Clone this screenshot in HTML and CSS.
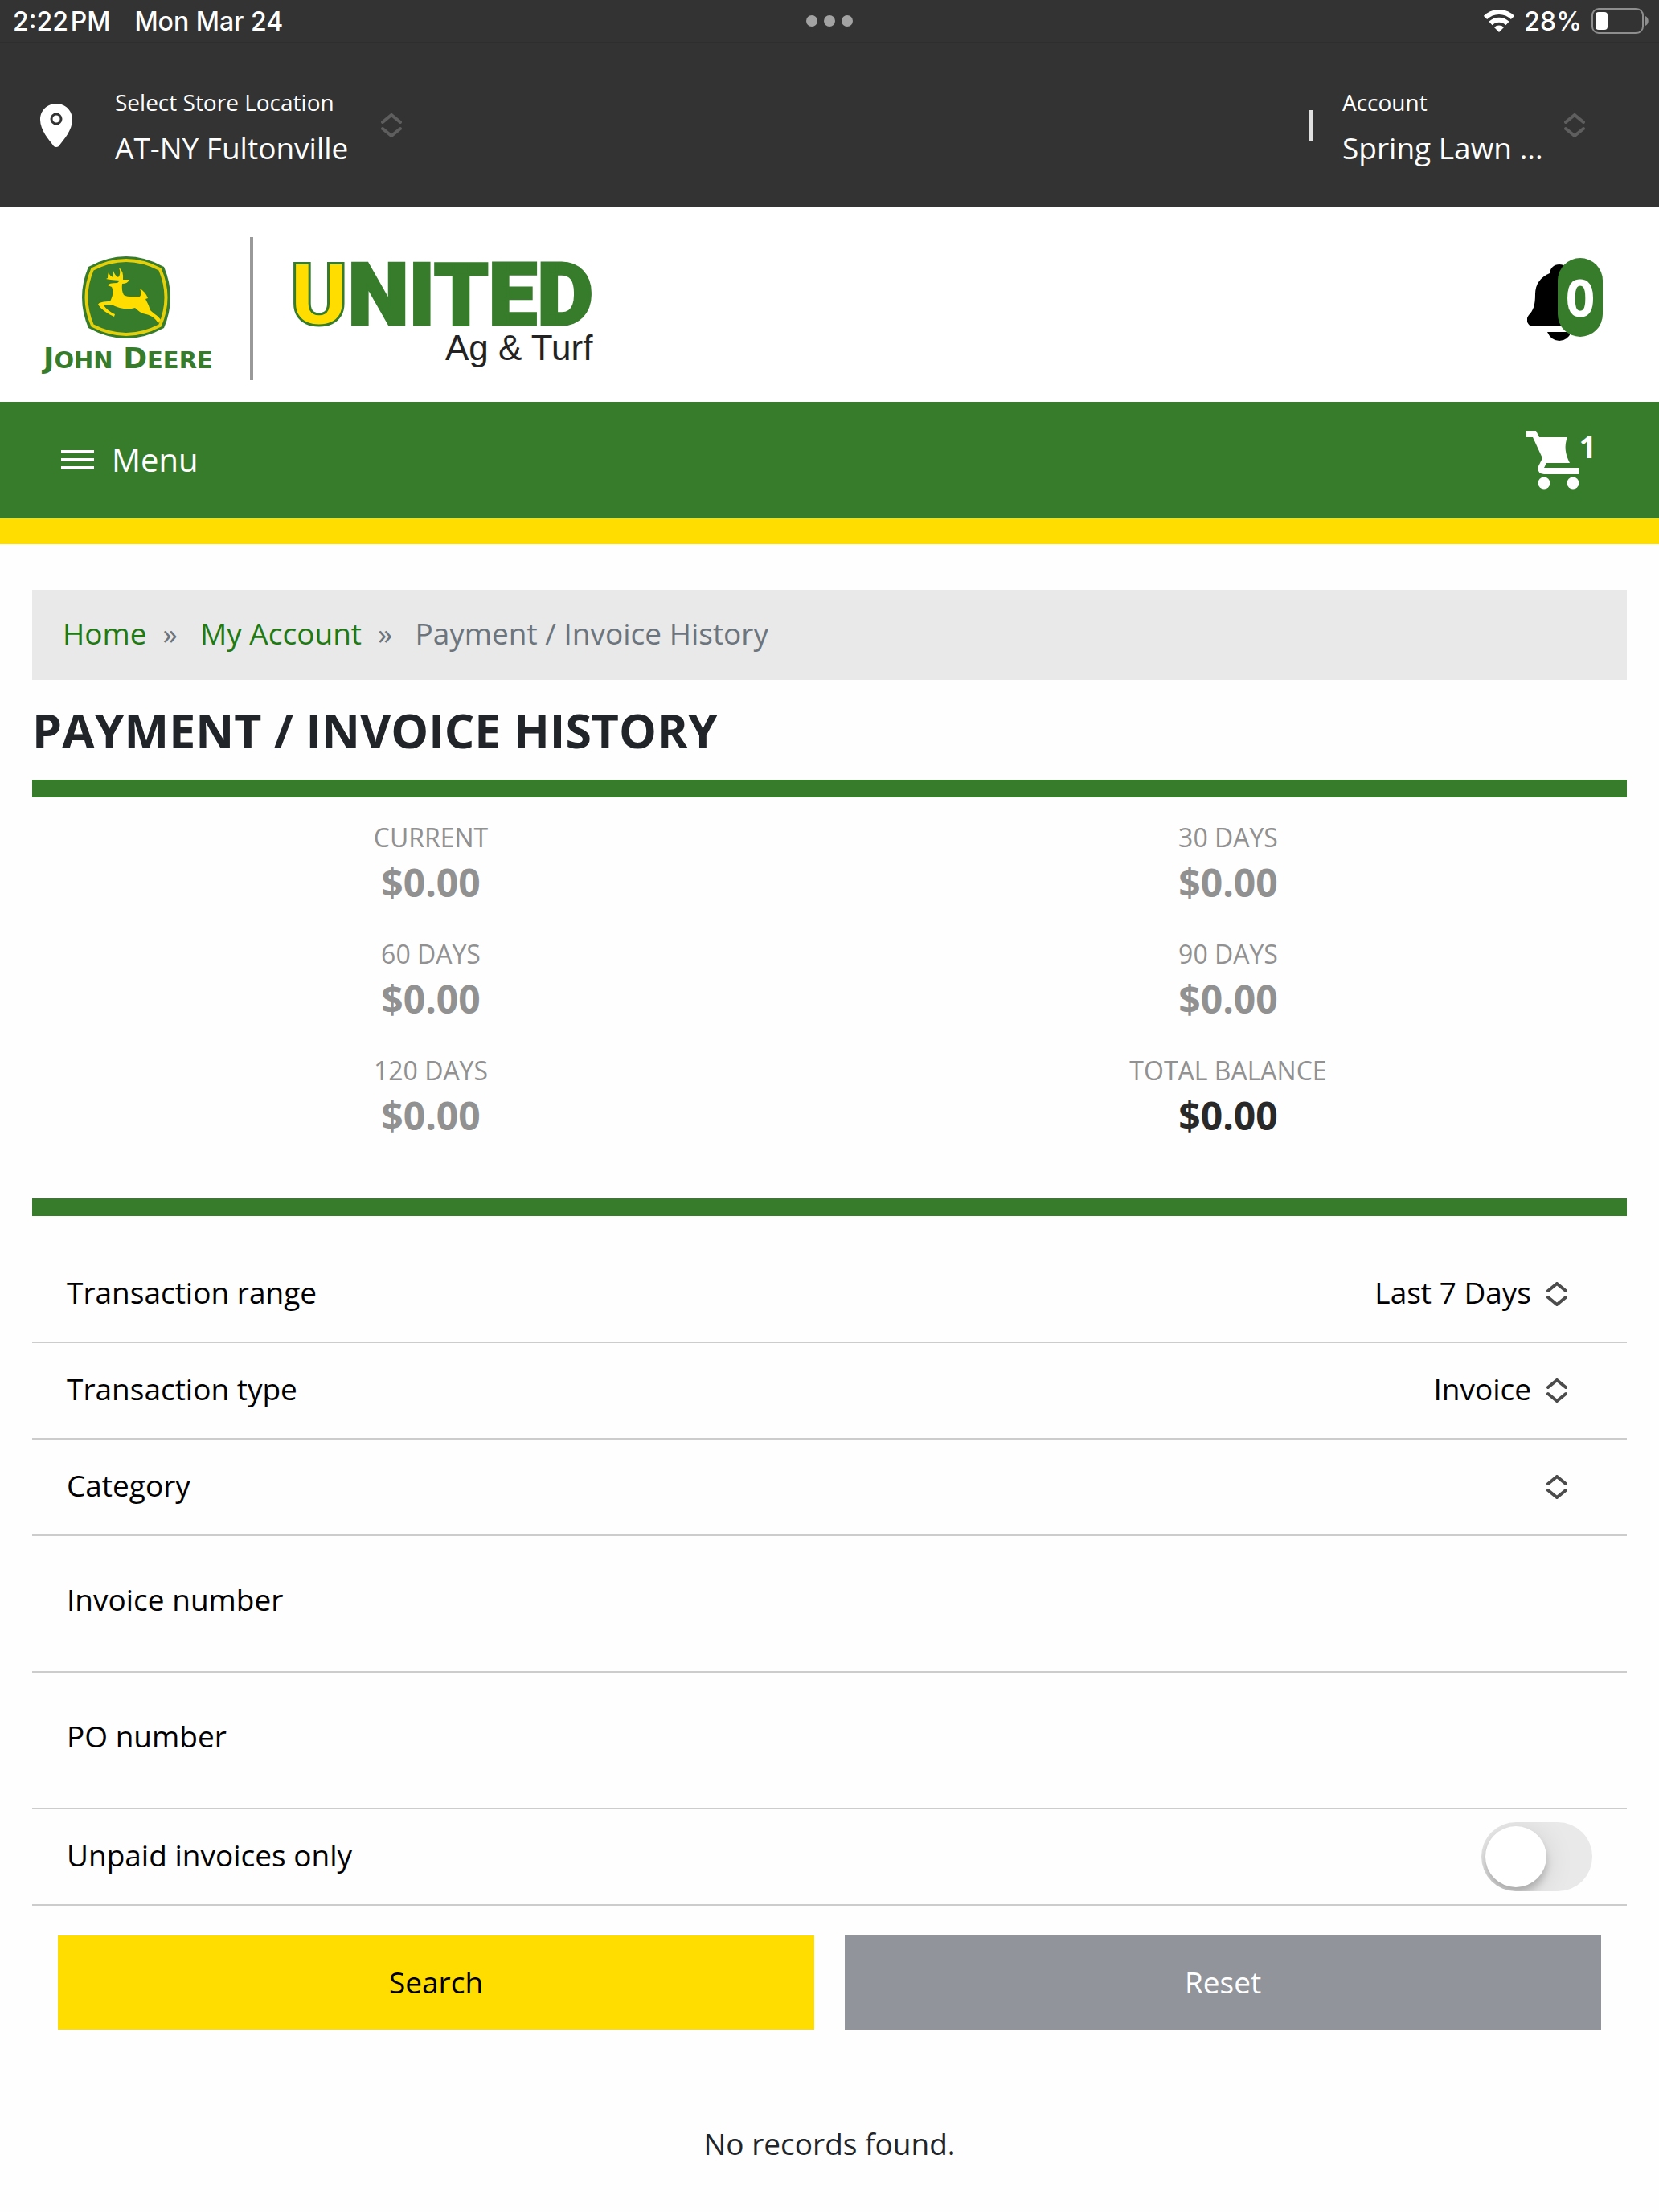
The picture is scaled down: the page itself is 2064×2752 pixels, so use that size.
FILE: index.html
```html
<!DOCTYPE html>
<html lang="en">
	<head>
		<meta charset="utf-8">
		<meta name="viewport" content="width=device-width, initial-scale=1">
		<title>Payment / Invoice History</title>
		<link rel="stylesheet" href="styles.css">
	</head>

	<body>

		<!-- shared up/down arrows for the select boxes -->
		<svg width="0" height="0" class="sprite" aria-hidden="true">
			<symbol id="updown" viewBox="0 0 26 30">
				<path d="M2 11 L13 2 L24 11 M2 19 L13 28 L24 19" fill="none" stroke="currentColor" stroke-width="4" stroke-linecap="round"/>
			</symbol>
		</svg>

		<!-- device status bar -->
		<div class="status">
			<div class="status-left">
				<span>2:22&#8202;PM</span>
				<span>Mon Mar 24</span>
			</div>
			<div class="dots"><i></i><i></i><i></i></div>
			<div class="status-right">
				<svg class="wifi" viewBox="0 0 38 28">
					<path d="M2 10 A24 24 0 0 1 36 10" fill="none" stroke="#fff" stroke-width="6"/>
					<path d="M8.500 17 A15 15 0 0 1 29.500 17" fill="none" stroke="#fff" stroke-width="6"/>
					<path d="M13 22 A8.500 8.500 0 0 1 25 22 L19 28 Z" fill="#fff"/>
				</svg>
				<span>28%</span>
				<svg class="battery" viewBox="0 0 74 32">
					<rect x="1" y="1" width="63" height="30" rx="8" fill="none" stroke="#8e8e8e" stroke-width="2"/>
					<rect x="5" y="5" width="15" height="22" rx="4" fill="#fff"/>
					<path d="M67 10 C72 12 72 20 67 22 Z" fill="#8e8e8e"/>
				</svg>
			</div>
		</div>

		<!-- store and account pickers -->
		<div class="topbar">
			<div class="picker">
				<svg class="pin" viewBox="0 0 40 54">
					<path d="M20 0 C9 0 0 8 0 20 C0 33 11 45 17 53 Q20 55 23 53 C29 45 40 33 40 20 C40 8 31 0 20 0 Z" fill="#fff"/>
					<circle cx="20" cy="19" r="6" fill="none" stroke="#333" stroke-width="3"/>
				</svg>
				<div class="picker-text">
					<label for="store">Select Store Location</label>
					<select id="store"><option>AT-NY Fultonville</option></select>
				</div>
				<svg class="arrows"><use href="#updown"/></svg>
			</div>
			<div class="picker account">
				<div class="picker-text">
					<label for="account">Account</label>
					<select id="account"><option>Spring Lawn ...</option></select>
				</div>
				<svg class="arrows"><use href="#updown"/></svg>
			</div>
		</div>

		<!-- logos and notifications -->
		<header class="brand">
			<svg class="logo" viewBox="0 0 700 180" role="img" aria-label="John Deere, United Ag &amp; Turf">
				<path d="M60 37 Q107 11 154 37 Q170 75 154 113 Q107 139 60 113 Q44 75 60 37 Z" fill="#367c2b"/>
				<path d="M65 40 Q107 18 149 40 Q164 75 149 110 Q107 132 65 110 Q50 75 65 40 Z" fill="none" stroke="#e3cf0c" stroke-width="4"/>
				<path d="M72 84 C73 81 79 80 87 80 C90 74 92 68 89 62 L84 60 Q85 57 96 57 L99 54 Q85 53 82 52 L84 51 Q84 46 85 44 Q87 49 91 50 Q91 45 91 42 Q93 48 97 50 Q101 46 98 38 Q104 42 103 53 L111 53 Q109 58 102 58 Q101 67 104 72 C108 75 116 74 124 74 Q127 71 124 64 Q131 68 134 76 L131 77 Q135 84 137 91 C142 96 147 98 150 103 L147 107 C143 101 139 98 132 96 C126 95 122 92 118 88 C109 91 96 88 91 85 Q83 83 79 85 Q84 92 93 96 L92 99 Q78 93 72 84 Z" fill="#fd0"/>
				<text x="4" y="163" class="deere"><tspan class="big">J</tspan>OHN<tspan class="big"> D</tspan>EERE</text>
				<rect x="261" y="0" width="4" height="178" fill="#999"/>
				<text x="311" y="109" class="united"><tspan class="united-u">U</tspan>NITED</text>
				<text x="504" y="153" class="turf">Ag &amp; Turf</text>
			</svg>
			<button class="bell" aria-label="Notifications">
				<svg viewBox="0 0 80 95">
					<path d="M40 0 C33 0 29 4 28 11 C16 16 10 25 10 37 C10 50 8 57 2 63 C-3 69 1 77 7 77 L73 77 C79 77 83 69 78 63 C72 57 70 50 70 37 C70 25 64 16 52 11 C51 4 47 0 40 0 Z"/>
					<path d="M25 84 H55 Q50 95 40 95 Q30 95 25 84 Z"/>
				</svg>
				<span>0</span>
			</button>
		</header>

		<nav class="nav">
			<button class="menu">
				<svg viewBox="0 0 41 25"><path d="M0 2 H41 M0 12 H41 M0 22 H41" stroke="#fff" stroke-width="4"/></svg>
				<span>Menu</span>
			</button>
			<a class="cart" href="#" aria-label="Shopping cart">
				<svg viewBox="0 0 66 73">
					<path d="M0 0 H12 L16 8 H51 Q45 23 54 40 H25 L22 46 H65 V54 H22 Q14 53 14 46 L20 34 L8 8 H0 Z" fill="#fff"/>
					<circle cx="22" cy="65" r="7.500" fill="#fff"/>
					<circle cx="58" cy="65" r="7.500" fill="#fff"/>
				</svg>
				<span>1</span>
			</a>
		</nav>

		<main>
			<div class="crumbs">
				<a href="#">Home</a>
				<span class="sep">»</span>
				<a href="#">My Account</a>
				<span class="sep">»</span>
				<span>Payment / Invoice History</span>
			</div>

			<h1>PAYMENT / INVOICE HISTORY</h1>

			<!-- account balances by age -->
			<dl class="balances">
				<div><dt>CURRENT</dt><dd>$0.00</dd></div>
				<div><dt>30 DAYS</dt><dd>$0.00</dd></div>
				<div><dt>60 DAYS</dt><dd>$0.00</dd></div>
				<div><dt>90 DAYS</dt><dd>$0.00</dd></div>
				<div><dt>120 DAYS</dt><dd>$0.00</dd></div>
				<div class="total"><dt>TOTAL BALANCE</dt><dd>$0.00</dd></div>
			</dl>

			<!-- search filters -->
			<form>
				<div class="row">
					<label for="range">Transaction range</label>
					<select id="range"><option>Last 7 Days</option></select>
					<svg class="arrows"><use href="#updown"/></svg>
				</div>
				<div class="row">
					<label for="type">Transaction type</label>
					<select id="type"><option>Invoice</option></select>
					<svg class="arrows"><use href="#updown"/></svg>
				</div>
				<div class="row">
					<label for="category">Category</label>
					<select id="category"><option></option></select>
					<svg class="arrows"><use href="#updown"/></svg>
				</div>
				<div class="row tall">
					<label for="invoice">Invoice number</label>
					<input id="invoice" type="text">
				</div>
				<div class="row tall">
					<label for="po">PO number</label>
					<input id="po" type="text">
				</div>
				<div class="row switch-row">
					<label for="unpaid">Unpaid invoices only</label>
					<input id="unpaid" class="switch" type="checkbox">
				</div>
				<div class="buttons">
					<button type="button" class="search">Search</button>
					<button type="reset" class="reset">Reset</button>
				</div>
			</form>

			<p class="empty">No records found.</p>
		</main>

	</body>
</html>
```
FILE: styles.css
```css
* {
	box-sizing: border-box;
}

body {
	margin: 0;
	background: #fefefe;
	color: #000;
	font-family: "Open Sans", sans-serif;
	font-size: 37px;
}

button, select, input {
	margin: 0;
	padding: 0;
	border: 0;
	border-radius: 0;
	background: none;
	color: inherit;
	font: inherit;
}

select {
	appearance: none;
}

svg {
	display: block;
	flex: none;
}

.sprite {
	position: absolute;
}

.arrows {
	width: 26px;
	height: 30px;
	color: #4c4c4c;
}

/*
	device status bar
*/

.status {
	display: grid;
	grid-template-columns: 1fr auto 1fr;
	align-items: center;
	height: 54px;
	padding: 0 10px;
	border-bottom: 2px solid #2e2e2e;
	background: #333;
	color: #fff;
	font-family: Inter, sans-serif;
	font-size: 32px;
	font-weight: 500;
}

.status-left {
	display: flex;
	gap: 30px;
	padding-left: 6px;
}

.status-right {
	display: flex;
	align-items: center;
	justify-content: flex-end;
	gap: 12px;
}

.wifi {
	width: 38px;
	height: 28px;
}

.battery {
	width: 74px;
	height: 32px;
}

.dots {
	display: flex;
	gap: 8px;
}

.dots i {
	width: 14px;
	height: 14px;
	border-radius: 50%;
	background: #a3a3a3;
}

/*
	store and account pickers
*/

.topbar {
	display: flex;
	align-items: center;
	justify-content: space-between;
	height: 204px;
	padding: 0 92px 0 50px;
	background: #333;
	color: #fff;
}

.picker {
	display: flex;
	align-items: center;
}

.picker .arrows {
	margin-left: 40px;
	color: #5e5e5e;
}

.picker-text {
	display: flex;
	flex-direction: column;
}

.picker-text label {
	font-size: 28px;
	line-height: 54px;
}

.picker-text select {
	height: 58px;
}

.pin {
	width: 40px;
	height: 54px;
	margin-right: 53px;
}

.account::before {
	content: "";
	width: 4px;
	height: 38px;
	margin-right: 37px;
	background: #e0e0e0;
}

.account .arrows {
	margin-left: 26px;
}

/*
	logos and notifications
*/

.brand {
	display: flex;
	align-items: center;
	justify-content: space-between;
	height: 242px;
	padding: 0 70px 0 50px;
	background: #fff;
}

.logo {
	width: 700px;
	height: 180px;
	margin-top: 12px;
}

.deere {
	fill: #367c2b;
	font-family: "DejaVu Sans", sans-serif;
	font-size: 29px;
	font-weight: 700;
}

.deere .big {
	font-size: 36px;
}

.united {
	fill: #367c2b;
	stroke: #367c2b;
	stroke-width: 3px;
	font-family: Roboto, sans-serif;
	font-size: 108px;
	font-weight: 900;
}

.united-u {
	fill: #fd0;
}

.turf {
	fill: #222;
	font-family: "Liberation Sans", sans-serif;
	font-size: 44px;
}

.bell {
	position: relative;
	width: 94px;
	height: 102px;
	margin-bottom: 6px;
}

.bell svg {
	width: 80px;
	height: 95px;
}

.bell span {
	position: absolute;
	top: -4px;
	right: 0;
	width: 56px;
	height: 98px;
	border-radius: 28px;
	background: #367c2b;
	color: #fff;
	font-size: 64px;
	font-weight: 700;
	line-height: 98px;
}

/*
	main navigation
*/

.nav {
	display: flex;
	align-items: center;
	justify-content: space-between;
	height: 177px;
	padding: 0 78px 0 76px;
	border-bottom: 32px solid #fd0;
	background: #367c2b;
	color: #fff;
}

.menu {
	display: flex;
	align-items: center;
	gap: 22px;
	font-size: 40px;
}

.menu svg {
	width: 41px;
	height: 25px;
}

.menu span {
	padding-bottom: 3px;
}

.cart {
	display: flex;
	color: #fff;
	font-weight: 700;
	line-height: 40px;
	text-decoration: none;
}

.cart svg {
	width: 66px;
	height: 73px;
}

/*
	page content
*/

main {
	padding: 57px 40px 0;
}

.crumbs {
	display: flex;
	align-items: center;
	height: 112px;
	padding: 0 38px 5px;
	background: #e9e9e9;
	color: #6c757d;
}

.crumbs a {
	color: #1f7a12;
	text-decoration: none;
}

.sep {
	margin: 0 28px 0 20px;
}

h1 {
	margin: 0;
	color: #212529;
	font-size: 59px;
	font-weight: 700;
	line-height: 124px;
}

.balances {
	display: grid;
	grid-template-columns: 1fr 1fr;
	margin: 0;
	padding: 22px 0 42px;
	border: solid #367c2b;
	border-width: 22px 0;
	color: #919191;
	text-align: center;
}

.balances div {
	height: 145px;
}

.balances dt {
	font-size: 32px;
	line-height: 56px;
}

.balances dd {
	margin: 0;
	font-size: 48px;
	font-weight: 700;
	line-height: 56px;
}

.total dd {
	color: #292929;
}

/*
	search filters
*/

form {
	margin-top: 38px;
}

.row {
	display: flex;
	align-items: center;
	height: 120px;
	padding: 0 74px 0 43px;
	border-bottom: 2px solid #ccc;
}

.row label, .row select {
	padding-bottom: 5px;
}

.row select, .row input[type="text"] {
	flex: 1;
	height: 80px;
	margin-right: 19px;
	text-align: right;
	text-align-last: right;
}

.tall {
	height: 170px;
	padding-bottom: 6px;
}

.switch-row {
	justify-content: space-between;
	padding-right: 43px;
}

.switch {
	appearance: none;
	width: 138px;
	height: 86px;
	overflow: hidden;
	border-radius: 43px;
	background: #e9e9e9;
}

.switch::before {
	content: "";
	display: block;
	width: 76px;
	height: 76px;
	margin: 5px;
	border-radius: 50%;
	background: #fff;
	box-shadow: 0 8px 10px rgba(0, 0, 0, 0.2), 0 6px 36px rgba(0, 0, 0, 0.12);
}

.switch:checked::before {
	margin-left: 57px;
}

.buttons {
	display: grid;
	grid-template-columns: 1fr 1fr;
	gap: 38px;
	padding: 37px 32px 0;
}

.buttons button {
	height: 117px;
	padding-bottom: 3px;
}

.search {
	background: #fd0;
}

.reset {
	background: #91949b;
	color: #fff;
}

.empty {
	margin: 112px 0 0;
	color: #212529;
	text-align: center;
	line-height: 60px;
}
```
